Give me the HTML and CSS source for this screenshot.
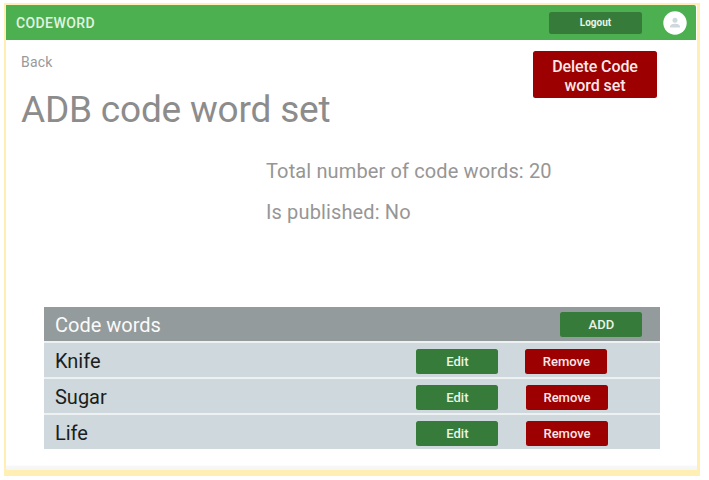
FILE: index.html
```html
<!DOCTYPE html>
<html lang="en">
<head>
<meta charset="utf-8">
<title>Codeword</title>
<link rel="stylesheet" href="styles.css">
</head>
<body>
<div class="frame">
  <header class="topbar">
    <span class="brand">CODEWORD</span>
    <button class="btn logout">Logout</button>
    <svg class="avatar" viewBox="0 0 24 24" aria-hidden="true">
      <circle cx="12" cy="12" r="11.7" fill="#fff"/>
      <circle cx="12" cy="9.200" r="2.500" fill="#cfd8dc"/>
      <path d="M7 16.600V15.300c0-1.700 3.300-2.500 5-2.500s5 .8 5 2.500v1.300z" fill="#cfd8dc"/>
    </svg>
  </header>
  <main>
    <div class="heading">
      <div>
        <a class="back">Back</a>
        <h1>ADB code word set</h1>
      </div>
      <button class="btn red delete">Delete Code<br>word set</button>
    </div>
    <div class="facts">
      <p>Total number of code words: 20</p>
      <p>Is published: No</p>
    </div>
    <section class="words">
      <div class="row head"><span class="title">Code words</span><button class="btn">ADD</button></div>
      <div class="row"><span class="word">Knife</span><button class="btn">Edit</button><button class="btn red first">Remove</button></div>
      <div class="row"><span class="word">Sugar</span><button class="btn">Edit</button><button class="btn red">Remove</button></div>
      <div class="row"><span class="word">Life</span><button class="btn">Edit</button><button class="btn red">Remove</button></div>
    </section>
  </main>
</div>
</body>
</html>
```
FILE: styles.css
```css
* { box-sizing: border-box; }
body { margin: 0; background: #fff; font-family: Roboto, sans-serif; color: #8c8c8c; }
.frame { width: 696px; height: 473px; margin: 3px 0 0 4px; border: 2px solid #ffefb3; border-right-width: 3px; border-bottom-width: 6px; background: linear-gradient(to top, #f5f5f5 0, #f8f8f8 4px, #fff 5px); }
.topbar { display: flex; align-items: center; width: 690px; height: 35px; padding-left: 10px; background: #4caf50; border-radius: 0 2px 0 0; }
.brand { flex: 1; padding-top: 1px; font-size: 14px; font-weight: 500; letter-spacing: .4px; color: #e0f4e1; }
.btn { flex: none; width: 82px; height: 25px; padding: 0; border: 0; border-radius: 2.5px; background: #367b39; color: #e8f3e8; font: 500 13px/15px Roboto, sans-serif; }
.red { background: #9c0000; color: #fce8e8; }
.logout { width: 93px; height: 22px; font-size: 10px; font-weight: 700; }
.avatar { width: 24px; height: 24px; margin: 0 9px 0 21px; }
.heading { display: flex; justify-content: space-between; height: 111px; padding: 11px 40px 0 15px; }
.back { display: block; margin-top: 2px; font-size: 14px; line-height: 18px; letter-spacing: .2px; color: #999; }
h1 { margin: 17px 0 0; font-size: 37px; line-height: 44px; font-weight: 400; letter-spacing: -.2px; }
.delete { width: 124px; height: 47px; padding: 3px 0 0 0; font-size: 16px; line-height: 19px; letter-spacing: -.1px; }
.facts { height: 156px; padding: 8px 0 0 260px; }
.facts p { margin: 0 0 17px; font-size: 20px; line-height: 24px; letter-spacing: .13px; color: #969696; }
.words { display: grid; gap: 2px; width: 616px; margin-left: 38.4px; background: #edf1f2; }
.row { display: flex; align-items: center; height: 34px; padding: 2px 52.400px 0 10.6px; background: #cfd8dc; }
.row .btn + .btn { margin-left: 27.6px; }
.row .btn + .first { margin: 0 .7px 0 26.900px; }
.word, .title { flex: 1; font-size: 20px; line-height: 24px; color: #1b1e20; }
.head { padding: 0 18px 0 10.6px; background: #939b9c; }
.title { padding-top: 1px; color: #fafafa; }
.word { padding-bottom: 1px; }
```
